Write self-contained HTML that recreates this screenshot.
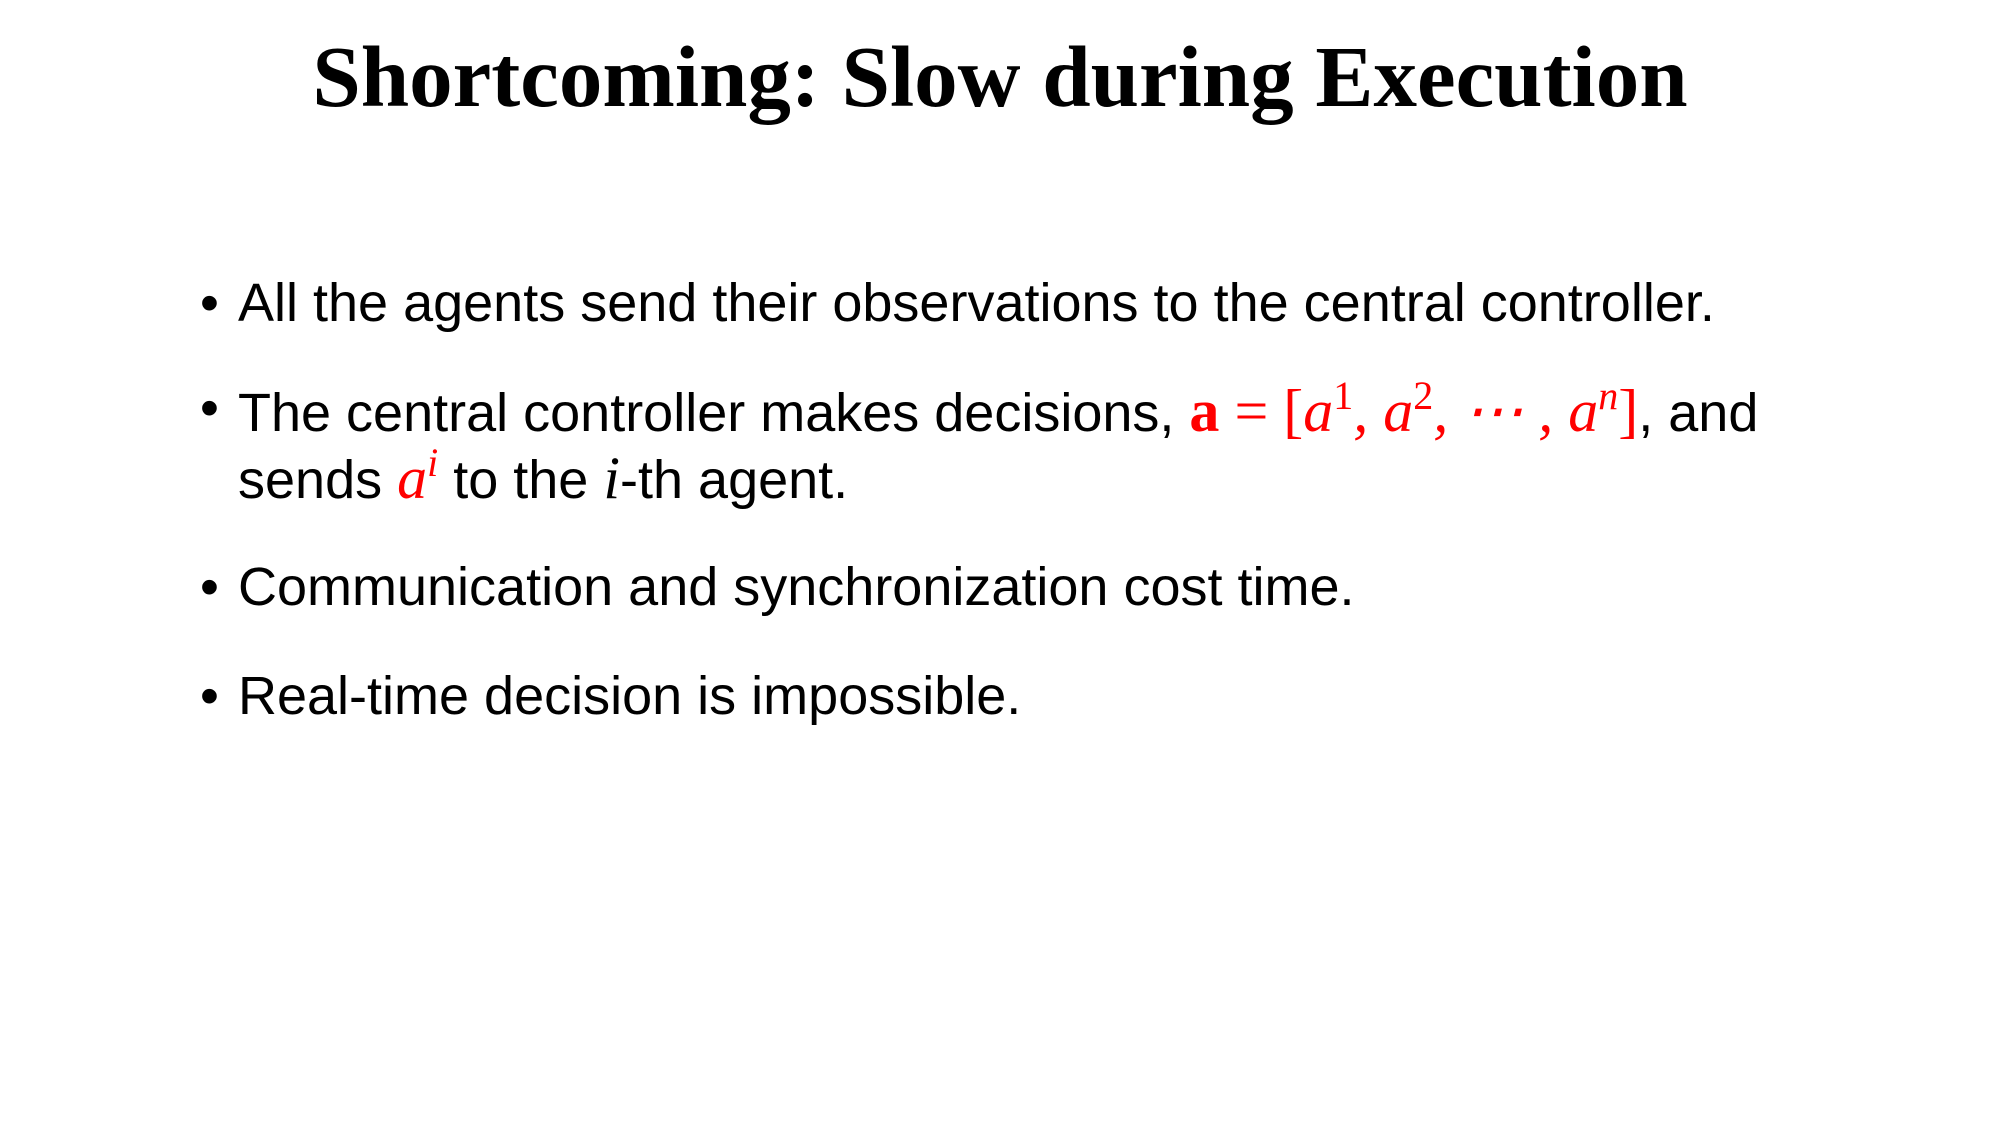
<!DOCTYPE html>
<html><head><meta charset="utf-8"><style>
html,body{margin:0;padding:0;background:#fff;}
body{width:2000px;height:1125px;position:relative;overflow:hidden;}
.t{position:absolute;left:0;width:2000px;text-align:center;top:26px;font:bold 87px "Liberation Serif",serif;color:#000;}
.l{position:absolute;left:238px;font:54px "Liberation Sans",sans-serif;color:#000;white-space:nowrap;line-height:1;}
.b{position:absolute;left:200px;font:54px "Liberation Sans",sans-serif;line-height:1;}
.m{font-family:"Liberation Serif",serif;color:#f00;font-style:italic;font-size:60px;}
.mb{font-family:"Liberation Serif",serif;color:#f00;font-weight:bold;font-size:60px;}
.mr{font-family:"Liberation Serif",serif;color:#f00;font-size:60px;}
sup{font-size:40px;vertical-align:22px;line-height:0;font-style:normal;}
sup.it{font-style:italic;}
.i{font-family:"Liberation Serif",serif;font-style:italic;font-size:60px;}
</style></head><body>
<div class="t">Shortcoming: Slow during Execution</div>
<div class="b" style="top:276px">•</div>
<div class="l" style="top:276px">All the agents send their observations to the central controller.</div>
<div class="b" style="top:381px">•</div>
<div class="l" style="top:381px">The central controller makes decisions, <span class="mb">a</span> <span class="mr">= [</span><span class="m">a<sup>1</sup>, a<sup>2</sup>, ⋯ , a<sup class="it">n</sup></span><span class="mr">]</span>, and</div>
<div class="l" style="top:448px">sends <span class="m">a<sup class="it">i</sup></span> to the <span class="i">i</span>-th agent.</div>
<div class="b" style="top:560px">•</div>
<div class="l" style="top:560px">Communication and synchronization cost time.</div>
<div class="b" style="top:669px">•</div>
<div class="l" style="top:669px">Real-time decision is impossible.</div>
</body></html>
